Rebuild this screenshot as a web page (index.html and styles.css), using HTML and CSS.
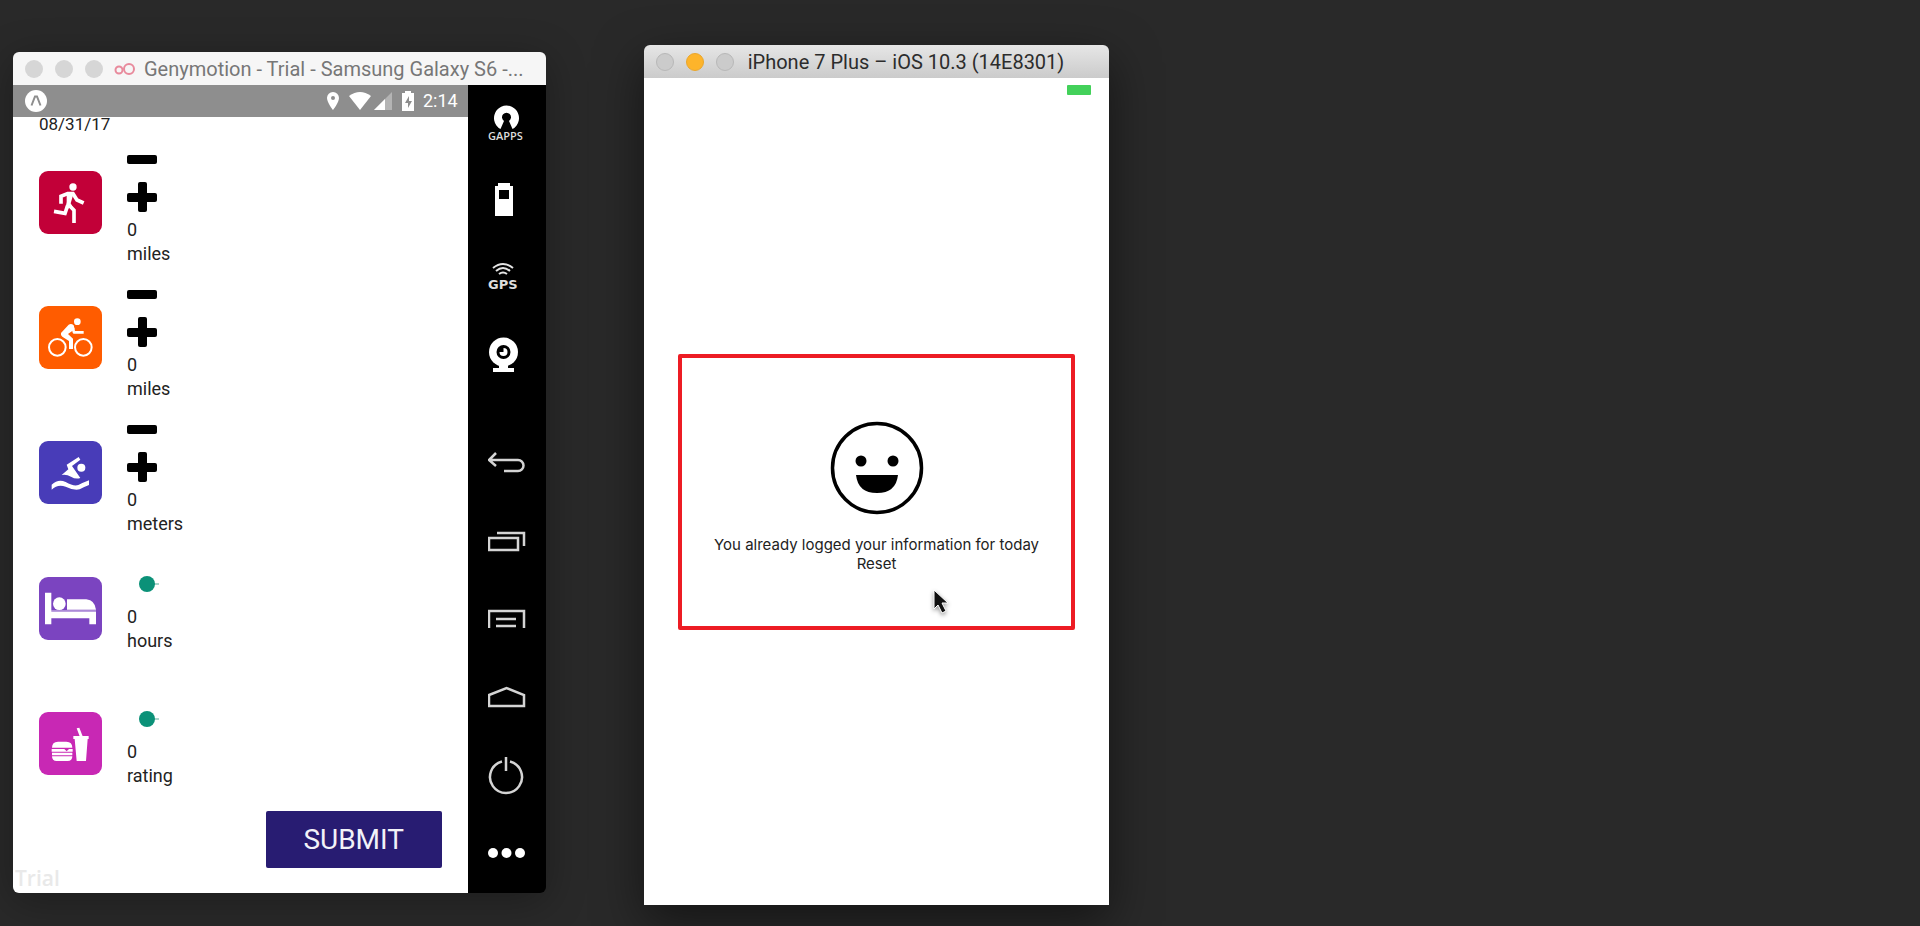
FILE: index.html
```html
<!DOCTYPE html>
<html lang="en">
<head>
<meta charset="utf-8">
<meta name="viewport" content="width=device-width, initial-scale=1">
<title>Fitness tracker simulators</title>
<link rel="stylesheet" href="styles.css">
</head>
<body>
<main class="desktop">
  <section class="window window-android" aria-label="Genymotion">
    <header class="titlebar titlebar-inactive">
      <div class="lights"><span class="light"></span><span class="light"></span><span class="light"></span></div>
      <svg class="geny-logo" viewBox="0 0 22 14" aria-hidden="true"><circle cx="5" cy="8" r="3.500"/><circle cx="15" cy="7" r="5"/></svg>
      <h1 class="title">Genymotion - Trial - Samsung Galaxy S6 -...</h1>
    </header>
    <div class="device">
      <div class="screen">
        <div class="statusbar">
          <svg class="expo" viewBox="0 0 22 22" aria-hidden="true"><circle cx="11" cy="11" r="11" fill="#fff"/><path d="M6.500 15.500L10 6.500h2l3.500 9" fill="none" stroke="#8e8e8e" stroke-width="2"/></svg>
          <div class="status-icons">
            <svg class="pin" viewBox="0 0 14 20" aria-hidden="true"><path d="M7 1a6 6 0 0 0-6 6c0 4.500 6 12 6 12s6-7.500 6-12a6 6 0 0 0-6-6zm0 8a2 2 0 1 1 0-4 2 2 0 0 1 0 4z" fill="#fff"/></svg>
            <svg class="wifi" viewBox="0 0 22 18" aria-hidden="true"><path d="M0 4Q11-4 22 4L11 18z" fill="#fff"/></svg>
            <svg class="signal" viewBox="0 0 18 18" aria-hidden="true"><path d="M18 0v18H0z" fill="#b4b4b4"/><path d="M11 7v11H0z" fill="#fff"/></svg>
            <svg class="charge" viewBox="0 0 12 20" aria-hidden="true"><path d="M3 0h6v2h3v18H0V2h3z" fill="#fff"/><path d="M7 5l-4 7h3v5l4-7H7z" fill="#8e8e8e"/></svg>
            <span class="clock">2:14</span>
          </div>
        </div>
        <form class="log">
          <p class="date">08/31/17</p>
          <div class="metrics">
            <div class="metric">
              <svg class="badge run" viewBox="0 0 189 189" aria-hidden="true"><g fill="none" stroke="#fff" stroke-width="11"><circle cx="102" cy="48" r="11" fill="#fff" stroke="none"/><path d="M66 98V76l20-8h16l12 19 20 9"/><path d="M83 65l21 2-9 30 6 12-22 6 4-22z" fill="#fff" stroke="none"/><path d="M86 103l-8 24-33-6M92 104l13 14v38"/></g></svg>
              <div class="control control-steps">
                <button class="step" type="button" aria-label="Less running"><svg viewBox="0 0 30 30" aria-hidden="true"><rect y="11" width="30" height="9" rx="2"/></svg></button>
                <button class="step" type="button" aria-label="More running"><svg viewBox="0 0 30 30" aria-hidden="true"><rect y="11" width="30" height="9" rx="2"/><rect x="11" width="9" height="30" rx="2"/></svg></button>
                <span class="value">0</span><span class="unit">miles</span>
              </div>
            </div>
            <div class="metric">
              <svg class="badge bike" viewBox="0 0 189 189" aria-hidden="true"><g fill="none" stroke="#fff"><circle cx="115" cy="47" r="10" fill="#fff" stroke="none"/><circle cx="55" cy="124" r="25" stroke-width="6"/><circle cx="133" cy="124" r="25" stroke-width="6"/><path d="M100 60l5 19h29" stroke-width="8" stroke-linejoin="round"/><path d="M66 81l23-25q8-5 15 2l3 12-20 14 15 14v31H90V105L70 92q-6-4-4-11z" fill="#fff" stroke="none"/></g></svg>
              <div class="control control-steps">
                <button class="step" type="button" aria-label="Less cycling"><svg viewBox="0 0 30 30" aria-hidden="true"><rect y="11" width="30" height="9" rx="2"/></svg></button>
                <button class="step" type="button" aria-label="More cycling"><svg viewBox="0 0 30 30" aria-hidden="true"><rect y="11" width="30" height="9" rx="2"/><rect x="11" width="9" height="30" rx="2"/></svg></button>
                <span class="value">0</span><span class="unit">miles</span>
              </div>
            </div>
            <div class="metric">
              <svg class="badge swim" viewBox="0 0 189 189" aria-hidden="true"><g fill="#fff"><circle cx="127" cy="80" r="12"/><path d="M119 48l5 8-25 19 25 36q-14 5-28-4-14-8-28-5l20-17-5-14z"/><path d="M38 131q20-19 42-8 24 14 38 9 14-7 32-14v14q-18 7-28 13-18 4-42-8-24-9-42 9z"/></g></svg>
              <div class="control control-steps">
                <button class="step" type="button" aria-label="Less swimming"><svg viewBox="0 0 30 30" aria-hidden="true"><rect y="11" width="30" height="9" rx="2"/></svg></button>
                <button class="step" type="button" aria-label="More swimming"><svg viewBox="0 0 30 30" aria-hidden="true"><rect y="11" width="30" height="9" rx="2"/><rect x="11" width="9" height="30" rx="2"/></svg></button>
                <span class="value">0</span><span class="unit">meters</span>
              </div>
            </div>
            <div class="metric">
              <svg class="badge sleep" viewBox="0 0 189 189" aria-hidden="true"><g fill="#fff"><path d="M18 47h19v53h134v42h-20v-18H37v18H18z"/><circle cx="61" cy="80" r="19"/><path d="M84 67h58q26 3 29 31H84z"/></g><path d="M37 102h134" stroke="#7b44c0" stroke-width="3"/></svg>
              <div class="control">
                <input class="slider" type="range" min="0" max="24" value="0" aria-label="Hours of sleep">
                <span class="value">0</span><span class="unit">hours</span>
              </div>
            </div>
            <div class="metric">
              <svg class="badge eat" viewBox="0 0 189 189" aria-hidden="true"><g fill="#fff"><path d="M39 107q0-18 18-18h25q18 0 18 18zM38 111h63v8H38zM39 122h61v8H39zM39 133h61q0 14-14 14H53q-14 0-14-14zM103 72h46v9h-3l-5 66h-28l-6-66h-4z"/><path d="M113 49l8-2 10 26h-9z"/></g><path d="M76 111h14l-7 7z" fill="#c828b4"/></svg>
              <div class="control">
                <input class="slider" type="range" min="0" max="10" value="0" aria-label="Food rating">
                <span class="value">0</span><span class="unit">rating</span>
              </div>
            </div>
          </div>
          <button class="submit" type="button">SUBMIT</button>
        </form>
        <span class="watermark">Trial</span>
      </div>
      <nav class="toolbar" aria-label="Emulator tools">
        <button class="tool" type="button" aria-label="GAPPS"><svg viewBox="0 0 38 40" aria-hidden="true"><path d="M12.500 25A12.500 12.500 0 1 1 24.500 25L21 17a4.500 4.500 0 1 0-5 0z" fill="#fff"/><text class="tool-text" x="0" y="36">GAPPS</text></svg></button>
        <button class="tool" type="button" aria-label="Battery"><svg viewBox="0 0 38 40" aria-hidden="true"><path d="M10 1h12v3h3v30H7V4h3z" fill="#fff"/><path d="M11 8h10v9H11z"/></svg></button>
        <button class="tool" type="button" aria-label="GPS"><svg viewBox="0 0 38 40" aria-hidden="true"><path d="M5 9q10-8 20 0M8 12q7-6 14 0M11 15q4-3 8 0" fill="none" stroke="#e4e4e4" stroke-width="2"/><text class="tool-text tool-text-bold" x="0" y="30">GPS</text></svg></button>
        <button class="tool" type="button" aria-label="Camera"><svg viewBox="0 0 38 40" aria-hidden="true"><path d="M11 27h9v4h6v4H5v-4h6z" fill="#fff"/><circle cx="15.500" cy="15" r="14.500" fill="#fff"/><circle cx="15.500" cy="15" r="7"/><path d="M15.500 11v4h-4a4 4 0 1 0 4-4z" fill="#fff"/></svg></button>
        <button class="tool tool-spaced" type="button" aria-label="Back"><svg class="line" viewBox="0 0 38 40" aria-hidden="true"><path d="M8 8l-7 7 7 6M1 15h29a5.500 5.500 0 0 1 0 11H16"/></svg></button>
        <button class="tool" type="button" aria-label="Recent apps"><svg class="line" viewBox="0 0 38 40" aria-hidden="true"><path d="M1 15h29v12H1zM9 10h27v13"/></svg></button>
        <button class="tool" type="button" aria-label="Menu"><svg class="line" viewBox="0 0 38 40" aria-hidden="true"><path d="M1 27V10h35v17M8 18h20M8 25h20"/></svg></button>
        <button class="tool" type="button" aria-label="Home"><svg class="line" viewBox="0 0 38 40" aria-hidden="true"><path d="M1 28V17l17.500-7L36 17v11z"/></svg></button>
        <button class="tool" type="button" aria-label="Power"><svg class="line" viewBox="0 0 38 40" aria-hidden="true"><path d="M14 5.500a16 16 0 1 0 8 0M18 1v14"/></svg></button>
        <button class="tool" type="button" aria-label="More"><svg viewBox="0 0 38 40" aria-hidden="true"><g fill="#fff"><circle cx="5" cy="19" r="5"/><circle cx="18.500" cy="19" r="5"/><circle cx="32" cy="19" r="5"/></g></svg></button>
      </nav>
    </div>
  </section>

  <section class="window window-ios" aria-label="iPhone simulator">
    <header class="titlebar titlebar-active">
      <div class="lights"><span class="light"></span><span class="light light-amber"></span><span class="light"></span></div>
      <h1 class="title">iPhone 7 Plus – iOS 10.3 (14E8301)</h1>
    </header>
    <div class="phone">
      <span class="phone-battery"></span>
      <div class="notice">
        <svg class="smiley" viewBox="0 0 114 114" aria-hidden="true"><circle cx="57" cy="57" r="44.500" fill="none" stroke="#000" stroke-width="3.500"/><circle cx="41" cy="50" r="5.500"/><circle cx="73" cy="50" r="5.500"/><path d="M36 64h42q-2 18-21 18T36 64z"/></svg>
        <p class="message">You already logged your information for today</p>
        <button class="reset" type="button">Reset</button>
        <svg class="cursor" viewBox="0 0 18 26" aria-hidden="true"><path d="M1 1v19l4-4 4 8 4-2-4-8h6z" fill="#111" stroke="#fff"/></svg>
      </div>
    </div>
  </section>
</main>
</body>
</html>
```
FILE: styles.css
```css
* { box-sizing: border-box; }

body {
  margin: 0;
  background: #292929;
  color: #222;
  font-family: Roboto, "Liberation Sans", sans-serif;
}

h1, p { margin: 0; font-weight: 400; }
button { border: 0; padding: 0; background: none; font: inherit; color: inherit; cursor: pointer; }
svg { display: block; flex-shrink: 0; }

.desktop {
  display: grid;
  grid-template-columns: minmax(440px, 533fr) minmax(400px, 466fr) 713fr;
  column-gap: 98px;
  min-height: 100vh;
  padding: 45px 0 21px 13px;
}

.window { display: flex; flex-direction: column; }
.window-android {
  margin: 7px 0 12px;
  border-radius: 6px;
  overflow: hidden;
  box-shadow: 0 8px 40px rgba(0, 0, 0, 0.3);
}
.window-ios {
  border-radius: 6px 6px 0 0;
  box-shadow: 0 16px 48px rgba(0, 0, 0, 0.5);
}

.titlebar {
  display: flex;
  align-items: center;
  height: 33px;
  padding: 0 12px;
}
.titlebar-inactive { background: #f6f6f6; color: #777; }
.titlebar-active {
  border-radius: 6px 6px 0 0;
  background: linear-gradient(#e6e6e6, #cbcbcb);
  color: #2c2c2c;
}
.lights { display: flex; flex-shrink: 0; gap: 12px; }
.light { width: 18px; height: 18px; border-radius: 50%; background: #d6d6d6; }
.titlebar-active .light { border: 1px solid #b8b8b8; background: #cbcbcb; }
.titlebar-active .light-amber { border-color: #eaa62b; background: #fdb42b; }
.geny-logo {
  width: 22px;
  height: 14px;
  margin-left: 11px;
  fill: none;
  stroke: #e88a9c;
  stroke-width: 2;
}
.title { font-size: 20px; line-height: 24px; white-space: nowrap; }
.titlebar-inactive .title { margin-left: 8px; }
.titlebar-active .title { margin-left: 14px; }

.device { display: flex; flex: 1; }
.screen {
  position: relative;
  display: flex;
  flex: 1;
  flex-direction: column;
  background: #fff;
}
.statusbar {
  display: flex;
  align-items: center;
  justify-content: space-between;
  height: 32px;
  padding: 0 10px 0 12px;
  background: #8e8e8e;
  color: #fff;
}
.expo { width: 22px; height: 22px; }
.status-icons { display: flex; align-items: center; }
.pin { width: 14px; height: 20px; margin-right: 9px; }
.wifi { width: 22px; height: 18px; margin-right: 3px; }
.signal { width: 18px; height: 18px; margin-right: 10px; }
.charge { width: 12px; height: 20px; margin-right: 9px; }
.clock { font-size: 18px; line-height: 20px; }

.log {
  display: flex;
  flex: 1;
  flex-direction: column;
  padding: 0 26px 25px;
  font-size: 18px;
}
.date { padding-bottom: 4px; font-size: 17px; line-height: 14px; }
.metrics { display: grid; flex: 1; grid-auto-rows: 1fr; }
.metric { display: flex; align-items: center; gap: 25px; }
.badge { width: 63px; height: 63px; border-radius: 9px; }
.run { background: #c20038; }
.bike { background: #ff5c00; }
.swim { background: #483cb8; }
.sleep { background: #7b44c0; }
.eat { background: #c828b4; }
.control { display: flex; flex-direction: column; align-items: flex-start; line-height: 24px; }
.step { display: grid; height: 38px; align-items: center; }
.step svg { width: 30px; height: 30px; }
.control-steps .value { margin-top: 2px; }

.slider {
  appearance: none;
  width: 20px;
  height: 42px;
  margin: 0 0 0 12px;
  background: linear-gradient(#a9d5cb, #a9d5cb) center / 100% 2px no-repeat;
  background-clip: content-box;
  padding-left: 8px;
}
.slider::-webkit-slider-thumb {
  appearance: none;
  width: 16px;
  height: 16px;
  margin-left: -8px;
  border-radius: 50%;
  background: #0b9178;
}

.submit {
  align-self: flex-end;
  width: 176px;
  height: 57px;
  border-radius: 2px;
  background: #281c72;
  color: #f2f2f8;
  font-size: 28px;
}
.watermark {
  position: absolute;
  bottom: 0;
  left: 2px;
  color: #e9e9e9;
  font: 600 21px/30px "Open Sans", sans-serif;
}

.toolbar { display: flex; flex-direction: column; width: 78px; background: #000; }
.tool { display: grid; flex: 1; place-items: center; min-height: 48px; }
.tool-spaced { margin-top: 30px; }
.tool svg { width: 38px; height: 40px; }
.tool-text { fill: #ddd; font: 600 11px "Open Sans", sans-serif; }
.tool-text-bold { font: 700 13px "DejaVu Sans", sans-serif; }
.line { fill: none; stroke: #d4d4d4; stroke-width: 2.5; }

.phone { display: grid; flex: 1; background: #fff; }
.phone-battery {
  grid-area: 1 / 1;
  place-self: start end;
  width: 24px;
  height: 10px;
  margin: 7px 18px;
  border-radius: 1px;
  background: #43d15a;
}
.notice {
  position: relative;
  display: flex;
  grid-area: 1 / 1;
  flex-direction: column;
  align-items: center;
  align-self: center;
  margin: 0 34px;
  padding: 53px 16px;
  border: 4px solid #ed1c24;
  border-radius: 2px;
  font: 15px/19px Inter, sans-serif;
}
.smiley { width: 114px; height: 114px; margin-bottom: 10px; }
.cursor {
  position: absolute;
  right: 120px;
  bottom: 11px;
  width: 18px;
  height: 26px;
  filter: drop-shadow(0 2px 2px rgba(0, 0, 0, 0.4));
}
```
